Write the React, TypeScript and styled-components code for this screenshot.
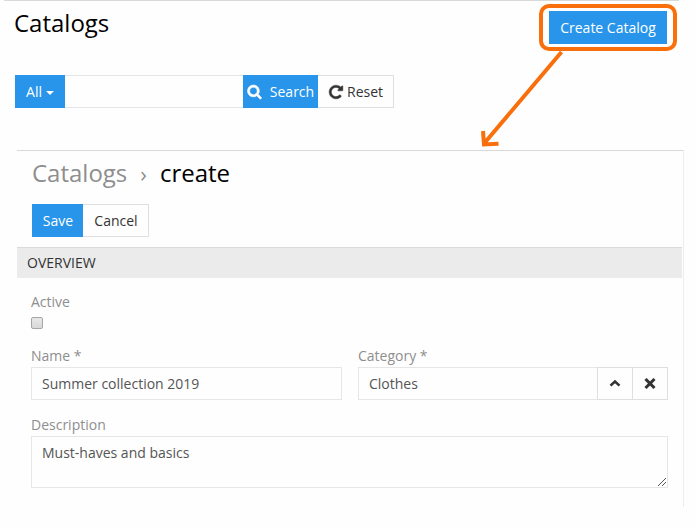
import React from "react";
import styled, { createGlobalStyle } from "styled-components";

const GlobalStyle = createGlobalStyle`
  *, *::before, *::after { box-sizing: border-box; }
  body {
    margin: 0;
    background: #fefefe;
    font-family: "Open Sans", sans-serif;
    font-size: 14px;
    line-height: 19px;
    color: #333;
  }
  button, input, textarea { font: inherit; margin: 0; border-radius: 0; }
`;

const Page = styled.main`
  position: relative;
  width: 696px;
  height: 528px;
  overflow: hidden;
`;

const PageHeader = styled.header`
  display: flex;
  justify-content: space-between;
  width: 675px;
  height: 75px;
  margin-left: 4px;
  padding: 4px 2px 0 10px;
  border-top: 1px solid #d9d9d9;
`;

const Title = styled.h1`
  margin: 0;
  font-size: 24px;
  line-height: 36px;
  font-weight: 400;
  color: #000;
`;

const Crumb = styled.span`
  color: #8e8e8e;
`;

const Separator = styled.span`
  margin: 0 13px 0 13px;
  color: #8e8e8e;
  font-size: 22px;
`;

const Highlight = styled.div`
  width: 138px;
  height: 47px;
  margin-top: -1px;
  padding: 3px 6px;
  border: 4px solid #f86f0b;
  border-radius: 10px;
`;

const Button = styled.button<{ $primary?: boolean; $width: number }>`
  display: inline-flex;
  align-items: center;
  justify-content: center;
  flex: none;
  width: ${(p) => p.$width}px;
  height: 33px;
  padding: 0;
  white-space: nowrap;
  color: ${(p) => (p.$primary ? "#fff" : "#333")};
  background: ${(p) => (p.$primary ? "#2895ea" : "#fefefe")};
  border: 1px solid ${(p) => (p.$primary ? "#2895ea" : "#dfdfdf")};
`;

const Joined = styled(Button)`
  border-left: 0;
`;

const SaveButton = styled(Button)`
  padding-left: 1px;
`;

const CancelButton = styled(Joined)`
  padding-left: 1px;
`;

const Icon = styled.svg<{ $gap?: number }>`
  flex: none;
  margin-right: ${(p) => p.$gap ?? 0}px;
`;

const Caret = styled.span`
  margin-left: 4px;
  margin-top: 3px;
  border: 4px solid transparent;
  border-top-color: #fff;
  border-bottom: 0;
`;

const SearchBar = styled.form`
  display: flex;
  width: 379px;
  margin-left: 15px;
`;

const TextInput = styled.input`
  flex: 1;
  min-width: 0;
  height: 33px;
  padding: 0 10px;
  color: #555;
  background: #fefefe;
  border: 1px solid #e6e6e6;
  outline: 0;
`;

const SearchInput = styled(TextInput)`
  border-left: 0;
  border-right: 0;
`;

const GroupedInput = styled(TextInput)`
  border-right-color: #dfdfdf;
`;

const Panel = styled.section`
  width: 667px;
  height: 357px;
  margin: 42px 0 0 17px;
  border-top: 1px solid #d9d9d9;
  border-right: 1px solid #ededed;
`;

const PanelHeader = styled.header`
  height: 96px;
  padding: 4px 0 0 15px;
`;

const Actions = styled.div`
  display: flex;
  margin-top: 13px;
`;

const SectionTitle = styled.h2`
  width: 665px;
  height: 31px;
  margin: 0;
  padding-left: 10px;
  font-size: 14px;
  font-weight: 400;
  line-height: 30px;
  background: #ebebeb;
  border-top: 1px solid #dadada;
`;

const Fields = styled.div`
  display: grid;
  grid-template-columns: 311px 310px;
  column-gap: 16px;
  padding: 14px 0 0 14px;
`;

const Field = styled.div<{ $wide?: boolean; $height: number }>`
  display: flex;
  flex-direction: column;
  height: ${(p) => p.$height}px;
  grid-column: ${(p) => (p.$wide ? "1 / -1" : "auto")};
`;

const Label = styled.label`
  flex: none;
  height: 21px;
  color: #8e8e8e;
`;

const Checkbox = styled.input`
  appearance: none;
  width: 12px;
  height: 12px;
  margin: 4px 0 0;
  border: 1px solid #a6a6a6;
  border-radius: 2px;
  background: linear-gradient(#e8e8e8, #d8d8d8);
`;

const Group = styled.div`
  display: flex;
`;

const AreaWrap = styled.div`
  position: relative;
  height: 52px;
`;

const TextArea = styled.textarea`
  display: block;
  width: 100%;
  height: 52px;
  padding: 6px 10px;
  line-height: 20px;
  color: #555;
  background: #fefefe;
  border: 1px solid #e6e6e6;
  outline: 0;
  resize: none;
`;

const Grip = styled.svg`
  position: absolute;
  right: 2px;
  bottom: 2px;
`;

const Arrow = styled.svg`
  position: absolute;
  left: 476px;
  top: 48px;
`;

const SEARCH =
  "M1216 832q0-185-131.5-316.5t-316.5-131.5-316.5 131.5-131.5 316.5 131.5 316.5 316.5 131.5 316.5-131.5 131.5-316.5zm512 832q0 52-38 90t-90 38q-54 0-90-38l-343-342q-179 124-399 124-143 0-273.5-55.5t-225-150-150-225-55.5-273.5 55.5-273.5 150-225 225-150 273.5-55.5 273.5 55.5 225 150 150 225 55.5 273.5q0 220-124 399l343 343q37 37 37 90z";
const REPEAT =
  "M1664 256v448q0 26-19 45t-45 19h-448q-42 0-59-40-17-39 14-69l138-138q-148-137-349-137-104 0-198.5 40.5t-163.5 109.5-109.5 163.5-40.5 198.5 40.5 198.5 109.5 163.5 163.5 109.5 198.5 40.5q119 0 225-52t179-147q7-10 23-12 15 0 25 9l137 138q9 8 9.5 20.5t-7.5 22.5q-109 132-264 204.5t-327 72.5q-156 0-298-61t-245-164-164-245-61-298 61-298 164-245 245-164 298-61q147 0 284.5 55.5t244.5 156.5l130-129q29-31 70-14 39 17 39 59z";

const Glyph = ({ path, size, gap, weight = 0 }: { path: string; size: number; gap: number; weight?: number }) => (
  <Icon
    $gap={gap}
    width={size}
    height={size}
    viewBox="0 0 1792 1792"
    fill="currentColor"
    stroke="currentColor"
    strokeWidth={weight}
    overflow="visible"
  >
    <path d={path} />
  </Icon>
);

export default function App() {
  return (
    <Page>
      <GlobalStyle />
      <PageHeader>
        <Title>Catalogs</Title>
        <Highlight>
          <Button $primary $width={118}>Create Catalog</Button>
        </Highlight>
      </PageHeader>
      <SearchBar onSubmit={(e) => e.preventDefault()}>
        <Button type="button" $primary $width={50}>All<Caret /></Button>
        <SearchInput aria-label="Search" />
        <Button $primary $width={75}><Glyph path={SEARCH} size={15} gap={8} weight={70} />Search</Button>
        <Joined type="reset" $width={76}><Glyph path={REPEAT} size={16} gap={3} weight={50} />Reset</Joined>
      </SearchBar>

      <Panel>
        <PanelHeader>
          <Title>
            <Crumb>Catalogs</Crumb>
            <Separator>›</Separator>
            create
          </Title>
          <Actions>
            <SaveButton $primary $width={51}>Save</SaveButton>
            <CancelButton $width={66}>Cancel</CancelButton>
          </Actions>
        </PanelHeader>
        <SectionTitle>OVERVIEW</SectionTitle>
        <Fields>
          <Field $wide $height={54}>
            <Label htmlFor="active">Active</Label>
            <Checkbox id="active" type="checkbox" />
          </Field>
          <Field $height={69}>
            <Label htmlFor="name">Name *</Label>
            <Group><TextInput id="name" defaultValue="Summer collection 2019" /></Group>
          </Field>
          <Field $height={69}>
            <Label htmlFor="category">Category *</Label>
            <Group>
              <GroupedInput id="category" defaultValue="Clothes" />
              <Joined $width={35} aria-label="Select">
                <Icon width="12" height="12" viewBox="0 0 12 12" fill="none" stroke="currentColor" strokeWidth="2.5">
                  <path d="M1.5 7.700 6 3.500l4.500 4.200" />
                </Icon>
              </Joined>
              <Joined $width={35} aria-label="Clear">
                <Icon width="12" height="12" viewBox="0 0 12 12" fill="none" stroke="currentColor" strokeWidth="3">
                  <path d="M1.500 1 10.500 10M10.500 1 1.500 10" />
                </Icon>
              </Joined>
            </Group>
          </Field>
          <Field $wide $height={73}>
            <Label htmlFor="description">Description</Label>
            <AreaWrap>
              <TextArea id="description" defaultValue="Must-haves and basics" />
              <Grip width="8" height="8" viewBox="0 0 8 8" stroke="#555" fill="none">
                <path d="M0 8 8 0M4 8 8 4" />
              </Grip>
            </AreaWrap>
          </Field>
        </Fields>
      </Panel>

      <Arrow width="90" height="104" viewBox="0 0 90 104" fill="none" stroke="#f86f0b" strokeWidth="4">
        <path d="M85.500 4 8.500 95M7 83l1 13.500 14.500-.8" />
      </Arrow>
    </Page>
  );
}
